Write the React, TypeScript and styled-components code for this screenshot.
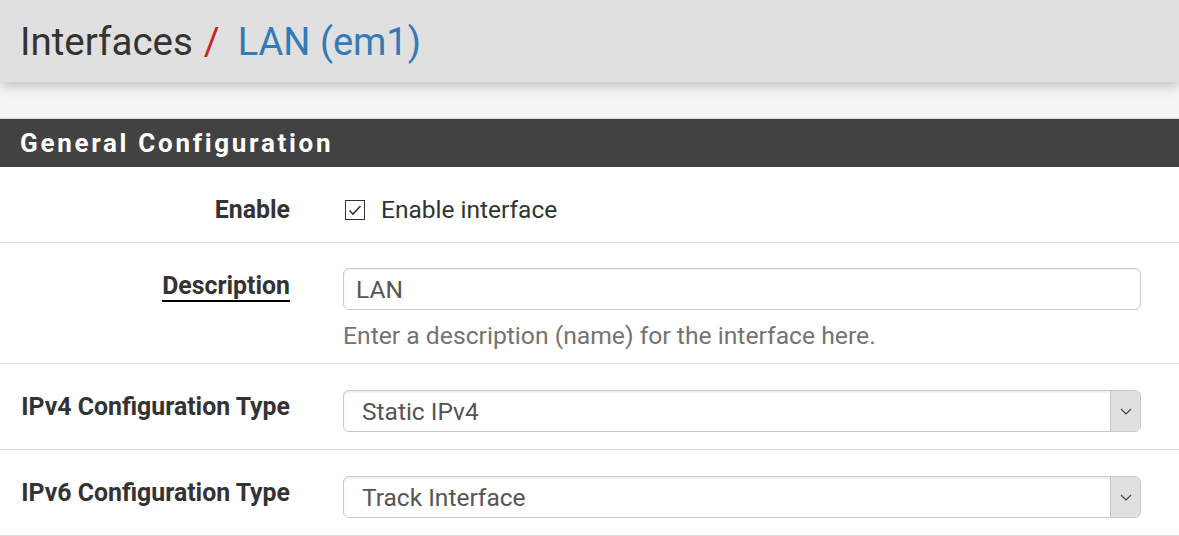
import { createGlobalStyle, styled } from "styled-components"

const GlobalStyle = createGlobalStyle`
  html, body {
    margin: 0;
    padding: 0;
    background: #f5f5f5;
    font-family: Roboto, "Liberation Sans", sans-serif;
    color: #333;
  }
  * { box-sizing: border-box; }
`

const Header = styled.header`
  height: 82px;
  background: #e0e0e0;
  box-shadow: 0 4px 12px rgba(0, 0, 0, 0.22);
  display: flex;
  align-items: center;
  padding: 0 20px 0;
  position: relative;
  z-index: 1;
`

const Crumbs = styled.h1`
  margin: 0;
  font-size: 38.5px;
  font-weight: 400;
  color: #333;
  display: flex;
  align-items: baseline;
`

const Slash = styled.span`
  color: #c62828;
  margin: 0 18px 0 11px;
`

const CrumbLink = styled.span`
  color: #337ab7;
  font-size: 38px;
`

const Page = styled.main`
  padding-top: 36px;
`

const Panel = styled.section`
  background: #fff;
  border-top: 1px solid #dcdcdc;
`

const PanelHeading = styled.div`
  background: #424242;
  height: 48px;
  display: flex;
  align-items: center;
  padding: 0 20px 0;
`

const PanelTitle = styled.h2`
  margin: 0;
  color: #fff;
  font-size: 26px;
  font-weight: 700;
  letter-spacing: 2.7px;
`

const Row = styled.div<{ $bottom: number }>`
  display: flex;
  align-items: flex-start;
  padding: 26px 0 ${(p) => p.$bottom}px;
  border-bottom: 1px solid #e0e0e0;
`

const Label = styled.div<{ $tip?: boolean }>`
  flex: 0 0 316px;
  padding-right: 26px;
  text-align: right;
  font-size: 24.85px;
  font-weight: 700;
  line-height: 34px;
  color: #333;

  span {
    text-decoration: ${(p) => (p.$tip ? "underline" : "none")};
    text-decoration-thickness: 2px;
    text-underline-offset: 6px;
    text-decoration-color: #000;
  }
`

const Control = styled.div`
  flex: 1;
  padding: 0 38px 0 27px;
`

const CheckLine = styled.label`
  display: flex;
  align-items: center;
  gap: 16px;
  font-size: 24.5px;
  line-height: 34px;
  color: #333;
`

const Box = styled.span`
  width: 20px;
  height: 20px;
  border: 1.5px solid #333;
  display: inline-flex;
  align-items: center;
  justify-content: center;
  margin-left: 2px;
`

const TextInput = styled.div`
  height: 42px;
  margin-top: -1px;
  border: 1px solid #ccc;
  border-radius: 6px;
  box-shadow: inset 0 1px 2px rgba(0, 0, 0, 0.08);
  display: flex;
  align-items: center;
  padding: 0 12px;
  font-size: 24.5px;
  color: #555;
`

const Help = styled.p`
  margin: 9px 0 0;
  font-size: 24.7px;
  line-height: 34px;
  color: #737373;
`

const Select = styled.div`
  height: 42px;
  border: 1px solid #c8c8c8;
  border-radius: 6px;
  box-shadow: inset 0 2px 2px rgba(0, 0, 0, 0.06);
  display: flex;
  align-items: stretch;
  overflow: hidden;
  font-size: 24.5px;
  color: #555;
`

const SelectValue = styled.div`
  flex: 1;
  display: flex;
  align-items: center;
  padding-left: 18px;
`

const SelectButton = styled.div`
  width: 30px;
  background: #e0e0e0;
  border-left: 1px solid #c8c8c8;
  display: flex;
  align-items: center;
  justify-content: center;
`

const Chevron = () => (
  <svg width="12" height="7" viewBox="0 0 12 7" fill="none">
    <path d="M1 1l5 5 5-5" stroke="#444" strokeWidth="1.2" />
  </svg>
)

export default function App() {
  return (
    <>
      <GlobalStyle />
      <Header>
        <Crumbs>
          Interfaces
          <Slash>/</Slash>
          <CrumbLink>LAN (em1)</CrumbLink>
        </Crumbs>
      </Header>
      <Page>
        <Panel>
          <PanelHeading>
            <PanelTitle>General Configuration</PanelTitle>
          </PanelHeading>
          <Row $bottom={15}>
            <Label><span>Enable</span></Label>
            <Control>
              <CheckLine>
                <Box>
                  <svg width="14" height="12" viewBox="0 0 14 12" fill="none">
                    <path d="M1.5 6.5l3.5 3.5 7.5-8" stroke="#333" strokeWidth="1.6" />
                  </svg>
                </Box>
                Enable interface
              </CheckLine>
            </Control>
          </Row>
          <Row $bottom={10}>
            <Label $tip><span>Description</span></Label>
            <Control>
              <TextInput>LAN</TextInput>
              <Help>Enter a description (name) for the interface here.</Help>
            </Control>
          </Row>
          <Row $bottom={17}>
            <Label><span>IPv4 Configuration Type</span></Label>
            <Control>
              <Select>
                <SelectValue>Static IPv4</SelectValue>
                <SelectButton><Chevron /></SelectButton>
              </Select>
            </Control>
          </Row>
          <Row $bottom={17}>
            <Label><span>IPv6 Configuration Type</span></Label>
            <Control>
              <Select>
                <SelectValue>Track Interface</SelectValue>
                <SelectButton><Chevron /></SelectButton>
              </Select>
            </Control>
          </Row>
        </Panel>
      </Page>
    </>
  )
}
